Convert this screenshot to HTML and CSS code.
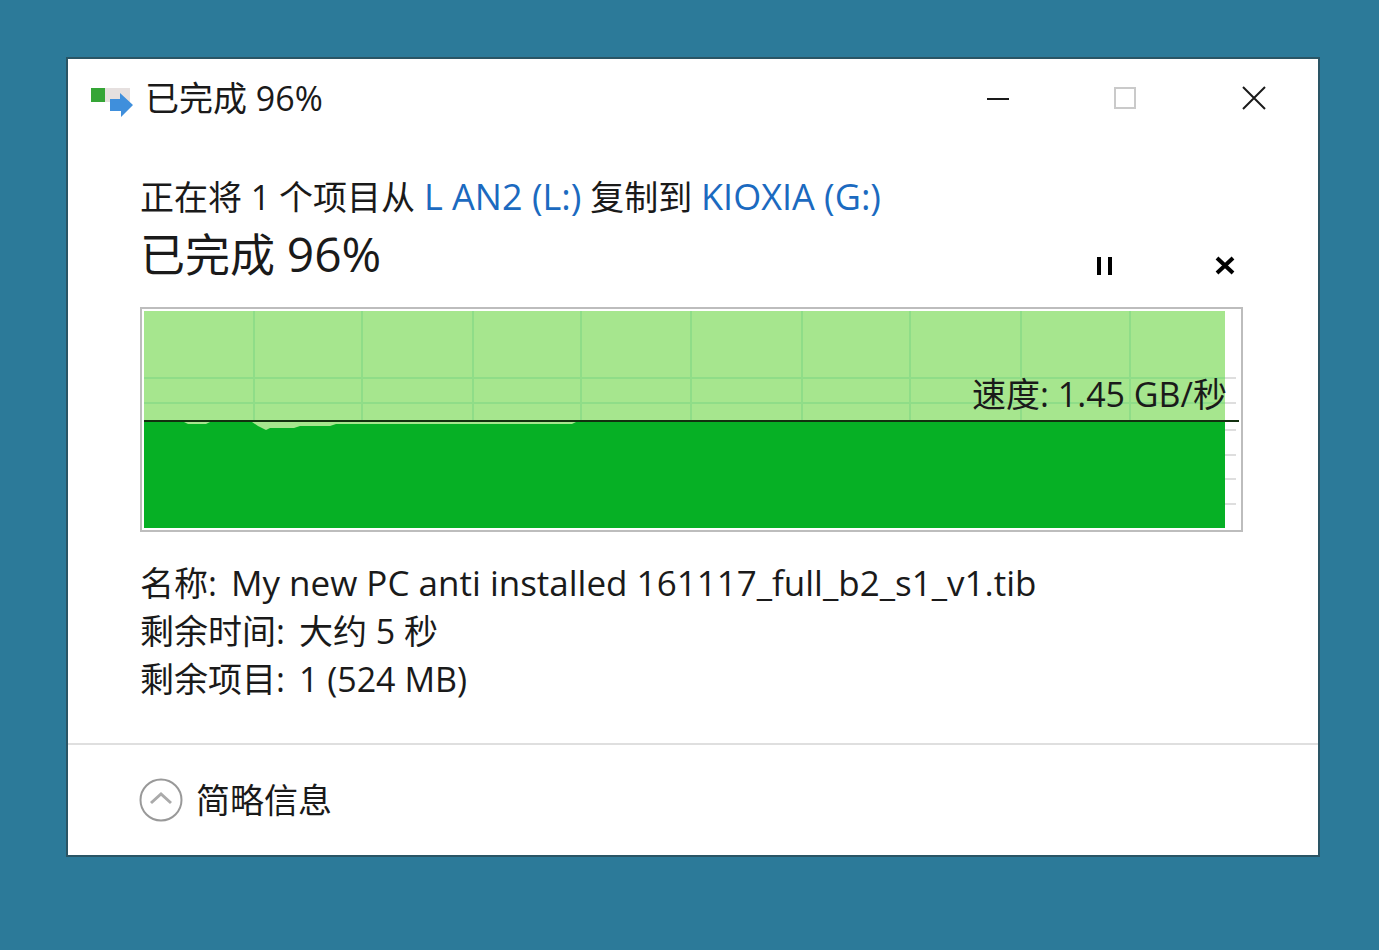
FILE: index.html
```html
<!DOCTYPE html>
<html lang="zh-CN">
<head>
    <meta charset="UTF-8">
    <meta name="viewport" content="width=device-width, initial-scale=1.0">
    <title>已完成 96%</title>
    <link rel="stylesheet" href="styles.css">
</head>
<body>
    <div class="window">
        <!-- Title bar -->
        <header class="title-bar">
            <svg class="app-icon" width="44" height="32" viewBox="0 0 44 32" aria-hidden="true">
                <rect x="14" y="1" width="26" height="14" fill="#e6e0df"/>
                <rect x="1" y="1" width="14" height="14" fill="#35a536"/>
                <path d="M20 12H30V6L43 18L31 30V24H20Z" fill="#3f8fdc"/>
            </svg>
            <span class="title">已完成 96%</span>
            <div class="window-buttons">
                <button type="button" aria-label="最小化">
                    <svg width="24" height="24" viewBox="0 0 24 24"><path d="M1 13H23" stroke="#1a1a1a" stroke-width="2"/></svg>
                </button>
                <button type="button" aria-label="最大化" disabled>
                    <svg width="24" height="24" viewBox="0 0 24 24"><rect x="1" y="2" width="20" height="20" fill="none" stroke="#cacaca" stroke-width="2"/></svg>
                </button>
                <button type="button" aria-label="关闭">
                    <svg width="24" height="24" viewBox="0 0 24 24"><path d="M1 1L23 23M23 1L1 23" stroke="#1a1a1a" stroke-width="2"/></svg>
                </button>
            </div>
        </header>

        <main class="content">
            <p class="summary">正在将 1 个项目从 <a href="#">L AN2 (L:)</a> 复制到 <a href="#">KIOXIA (G:)</a></p>
            <div class="progress-row">
                <h1>已完成 <span class="percent">96%</span></h1>
                <div class="actions">
                    <button type="button" aria-label="暂停">
                        <svg width="20" height="20" viewBox="0 0 20 20"><path d="M4 1V19M15 1V19" stroke="#000" stroke-width="4"/></svg>
                    </button>
                    <button type="button" aria-label="取消">
                        <svg width="20" height="20" viewBox="0 0 20 20"><path d="M2 2L18 17M18 2L2 17" stroke="#000" stroke-width="4"/></svg>
                    </button>
                </div>
            </div>

            <!-- Speed graph -->
            <div class="graph">
                <svg viewBox="0 0 1095 217" preserveAspectRatio="none" aria-hidden="true">
                    <path class="grid-outer" d="M1081 67H1092M1081 92H1092M1081 119H1092M1081 144H1092M1081 168H1092M1081 193H1092"/>
                    <rect class="done" width="1081" height="217"/>
                    <path class="grid" d="M110 0V109M218 0V109M329 0V109M437 0V109M547 0V109M658 0V109M766 0V109M877 0V109M986 0V109M0 67H1081M0 92H1081"/>
                    <path class="speed" d="M0 111H40L44 113H62L66 111H108L114 115L122 119L126 117H150L156 115H186L192 113H428L432 111H1081V217H0Z"/>
                    <path class="speed-line" d="M0 110H1095"/>
                </svg>
                <span class="speed-label">速度: 1.45 GB/秒</span>
            </div>

            <dl class="details">
                <div><dt>名称:</dt><dd class="file-name">My new PC anti installed 161117_full_b2_s1_v1.tib</dd></div>
                <div><dt>剩余时间:</dt><dd>大约 5 秒</dd></div>
                <div><dt>剩余项目:</dt><dd>1 (524 MB)</dd></div>
            </dl>
        </main>

        <footer class="footer">
            <button type="button" class="toggle">
                <svg width="44" height="44" viewBox="0 0 44 44" aria-hidden="true">
                    <circle cx="22" cy="22" r="20.500" fill="none" stroke="#999" stroke-width="2"/>
                    <path d="M12 25L22 16L32 25" fill="none" stroke="#aaa" stroke-width="3"/>
                </svg>
                简略信息
            </button>
        </footer>
    </div>
</body>
</html>
```
FILE: styles.css
```css
* {
    box-sizing: border-box;
}
body {
    margin: 0;
    padding: 57px 59px 57px 66px;
    background-color: #2c7a99;
    color: #1a1a1a;
    font-family: "Open Sans", "Noto Sans CJK SC", sans-serif;
    font-size: 34px;
    line-height: 48px;
}
button {
    display: flex;
    align-items: center;
    justify-content: center;
    padding: 0;
    border: none;
    background: none;
    color: inherit;
    font: inherit;
    cursor: pointer;
}
.window {
    background-color: #fff;
    border: 2px solid #2a5565;
}

/* Title bar */
.title-bar {
    display: flex;
    align-items: center;
    height: 78px;
    padding-left: 22px;
}
.app-icon {
    margin: 10px 11px 0 0;
}
.window-buttons {
    display: flex;
    align-self: stretch;
    margin-left: auto;
}
.window-buttons button {
    width: 128px;
}

/* Content */
.content {
    padding: 36px 75px 40px 72px;
}
.summary {
    margin: 0;
}
.summary a {
    color: #1b6ac0;
    font-size: 36px;
    line-height: 36px;
    text-decoration: none;
}
.progress-row {
    display: flex;
    justify-content: space-between;
    height: 86px;
}
h1 {
    margin: 0;
    font-size: 45px;
    font-weight: normal;
    line-height: 68px;
}
.percent {
    font-size: 48px;
    line-height: 48px;
}
.actions {
    display: flex;
    gap: 84px;
    padding: 24px 0 20px;
}
.actions button {
    width: 36px;
}
.graph {
    position: relative;
    border: 2px solid #bdbdbd;
    padding: 2px;
}
.graph svg {
    display: block;
    width: 100%;
    height: 217px;
}
.done {
    fill: #a6e68e;
}
.grid,
.grid-outer {
    fill: none;
    stroke: #8fdd88;
    stroke-width: 2;
}
.grid-outer {
    stroke: #dedede;
}
.speed {
    fill: #06b025;
}
.speed-line {
    stroke: #12300f;
    stroke-width: 2;
}
.speed-label {
    position: absolute;
    right: 14px;
    bottom: 112px;
}
.details {
    margin: 27px 0 0;
}
.details div {
    display: flex;
    gap: 14px;
}
.details dd {
    margin: 0;
}
.details .file-name {
    font-size: 35px;
}

/* Footer */
.footer {
    display: flex;
    align-items: center;
    height: 112px;
    padding-left: 71px;
    border-top: 2px solid #dfdfdf;
}
.toggle {
    gap: 13px;
}
```
